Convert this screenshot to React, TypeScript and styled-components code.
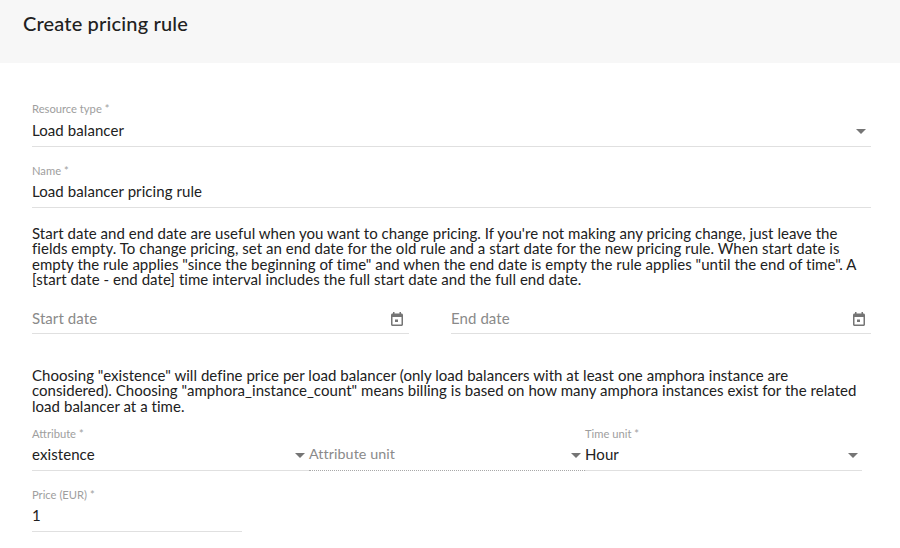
import React from "react";
import styled, { createGlobalStyle } from "styled-components";

const Global = createGlobalStyle`
  html, body { margin: 0; padding: 0; background: #fff; height: 548px; overflow: hidden; }
  body { font-family: Lato, "Open Sans", sans-serif; color: #212121; }
`;
const Page = styled.div`width: 900px; height: 548px; overflow: hidden;`;
const Header = styled.header`
  height: 63px; box-sizing: border-box; background: #f7f7f7; padding: 11px 23px 0;
  font-size: 20px; line-height: 25px; font-weight: 500; letter-spacing: 0.16px; color: #212121;
`;
const Body = styled.main`padding: 38px 29px 0 32px; display: flex; flex-direction: column;`;
const Field = styled.div<{ $width?: number; $dotted?: boolean; $mb?: number; $mt?: number; $tight?: boolean }>`
  position: relative; box-sizing: border-box;
  width: ${p => (p.$width ? `${p.$width}px` : "100%")};
  height: ${p => (p.$tight ? 45 : 46)}px; margin-bottom: ${p => p.$mb ?? 0}px; margin-top: ${p => p.$mt ?? 0}px;
  border-bottom: 1px ${p => (p.$dotted ? "dotted #a8a8a8" : "solid #e0e0e0")};
  display: flex; flex-direction: column; flex: none;
`;
const Label = styled.label<{ $pad?: number }>`
  font-size: 11.2px; line-height: 14px; color: #9e9e9e; height: 15px; padding-top: ${p => p.$pad ?? 1}px; box-sizing: content-box;
`;
const Value = styled.div<{ $muted?: boolean; $mt?: number }>`
  font-size: ${p => (p.$muted ? 14.3 : 15)}px; line-height: 22px; margin-top: ${p => p.$mt ?? 2}px; letter-spacing: 0.08px;
  color: ${p => (p.$muted ? "#8a8a8a" : "#212121")};
`;
const Caret = styled.span<{ $row?: boolean }>`
  position: absolute; right: ${p => (p.$row ? 4 : 5)}px; top: ${p => (p.$row ? 27 : 28)}px; width: 0; height: 0;
  border-left: 5px solid transparent; border-right: 5px solid transparent; border-top: 5px solid #757575;
`;
const Para = styled.p<{ $mt: number }>`margin: ${p => p.$mt}px 0 0; font-size: 15px; line-height: 15.3px; letter-spacing: 0.04px; color: #212121; width: 836px;`;
const DateRow = styled.div`display: flex; gap: 42px; margin-top: 13px;`;
const DateField = styled.div<{ $width: number }>`
  width: ${p => p.$width}px; height: 34px; box-sizing: border-box; border-bottom: 1px solid #e0e0e0;
  display: flex; justify-content: space-between; align-items: flex-start; flex: none; padding-right: 6px; color: #8a8a8a; font-size: 15px; line-height: 22px; padding-top: 7px; letter-spacing: 0.08px;
`;
const AttrRow = styled.div`display: flex; margin-top: 12px;`;
const CalIcon = styled.svg`margin-top: 5px; flex: none;`;
const Cal = () => (
  <CalIcon width="12" height="14" viewBox="0 0 12 14">
    <path fill="#757575" d="M2 0h1.5v1.5h5V0H10v1.5h.5c.8 0 1.5.7 1.5 1.5v9.5c0 .8-.7 1.5-1.5 1.5h-9C.7 14 0 13.3 0 12.5V3c0-.8.7-1.5 1.5-1.5H2zM1.5 5v7.5h9V5zM4 7.5h3v2.5H4z" />
  </CalIcon>
);

export default function App() {
  return (
    <Page>
      <Global />
      <Header>Create pricing rule</Header>
      <Body>
        <Field $mb={15}><Label>Resource type *</Label><Value>Load balancer</Value><Caret /></Field>
        <Field><Label $pad={2}>Name *</Label><Value $mt={1}>Load balancer pricing rule</Value></Field>
        <Para $mt={18}>Start date and end date are useful when you want to change pricing. If you're not making any pricing change, just leave the fields empty. To change pricing, set an end date for the old rule and a start date for the new pricing rule. When start date is empty the rule applies "since the beginning of time" and when the end date is empty the rule applies "until the end of time". A [start date - end date] time interval includes the full start date and the full end date.</Para>
        <DateRow>
          <DateField $width={377}>Start date<Cal /></DateField>
          <DateField $width={420}>End date<Cal /></DateField>
        </DateRow>
        <Para $mt={34}>Choosing "existence" will define price per load balancer (only load balancers with at least one amphora instance are considered). Choosing "amphora_instance_count" means billing is based on how many amphora instances exist for the related load balancer at a time.</Para>
        <AttrRow>
          <Field $width={277} $tight><Label>Attribute *</Label><Value $mt={1}>existence</Value><Caret $row /></Field>
          <Field $width={276} $tight $dotted><Label>&nbsp;</Label><Value $mt={1} $muted>Attribute unit</Value><Caret $row /></Field>
          <Field $width={277} $tight><Label>Time unit *</Label><Value $mt={1}>Hour</Value><Caret $row /></Field>
        </AttrRow>
        <Field $width={210} $mt={16} $tight><Label>Price (EUR) *</Label><Value $mt={1}>1</Value></Field>
      </Body>
    </Page>
  );
}
